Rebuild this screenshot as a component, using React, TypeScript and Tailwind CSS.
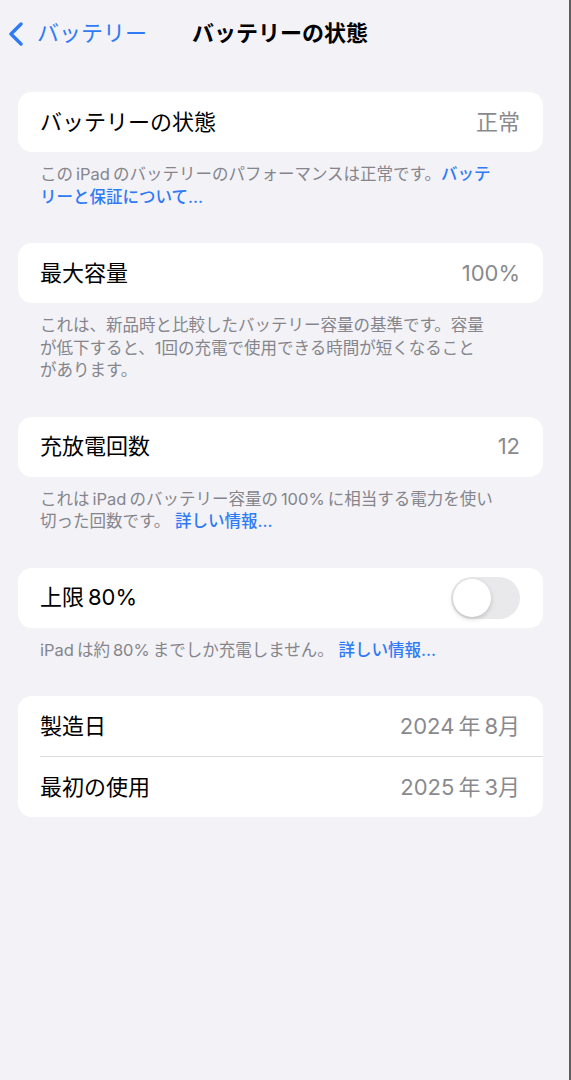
import type { ReactNode } from 'react';

const font = { fontFamily: '"Inter", "Noto Sans CJK JP", sans-serif' };

function Card({ children }: { children: ReactNode }) {
  return <div className="ml-[18px] w-[525px] rounded-[14px] bg-white">{children}</div>;
}

function Row({ label, value }: { label: string; value?: ReactNode }) {
  return (
    <div className="flex h-[60px] items-center justify-between pl-[22px] pr-[23px]">
      <span className="text-[22px] text-black">{label}</span>
      {value}
    </div>
  );
}

function Value({ children }: { children: ReactNode }) {
  return <span className="text-[22px] text-[#8a8a8e]">{children}</span>;
}

function Footer({ children }: { children: ReactNode }) {
  return (
    <p className="ml-[40px] mb-[35px] pt-[11px] text-[16.5px] leading-[22.5px] text-[#85858b]">
      {children}
    </p>
  );
}

function Link({ children }: { children: ReactNode }) {
  return <span className="font-medium text-[#2f7bf5]">{children}</span>;
}

function Toggle() {
  return (
    <div className="flex h-[42px] w-[69px] items-center rounded-full bg-[#e9e9eb] p-[2px]">
      <div className="h-[38px] w-[38px] rounded-full bg-white shadow-[0_2px_5px_rgba(0,0,0,0.18)]" />
    </div>
  );
}

export default function App() {
  return (
    <div className="flex min-h-[1080px] bg-[#f2f2f7]" style={font}>
      <div className="flex-1">
        {/* Navigation bar */}
        <div className="flex h-[66px] items-center pl-[9px]">
          <svg width="14" height="24" viewBox="0 0 14 24" fill="none" className="mt-[1px]">
            <path d="M12 2 L2 12 L12 22" stroke="#2f7bf5" strokeWidth="3.4" strokeLinecap="round" strokeLinejoin="round" />
          </svg>
          <span className="ml-[14px] text-[22px] text-[#2f7bf5]">バッテリー</span>
          <span className="ml-[45px] text-[22px] font-bold text-black">バッテリーの状態</span>
        </div>

        <div className="mt-[26px]">
          <Card>
            <Row label="バッテリーの状態" value={<Value>正常</Value>} />
          </Card>
          <Footer>
            この{'\u2009'}iPad{'\u2009'}のバッテリーのパフォーマンスは正常です。<Link>バッテ<br />リーと保証について…</Link>
          </Footer>

          <Card>
            <Row label="最大容量" value={<Value>100%</Value>} />
          </Card>
          <Footer>
            これは、新品時と比較したバッテリー容量の基準です。容量
            <br />
            が低下すると、1回の充電で使用できる時間が短くなること
            <br />
            があります。
          </Footer>

          <Card>
            <Row label="充放電回数" value={<Value>12</Value>} />
          </Card>
          <Footer>
            これは{'\u2009'}iPad{'\u2009'}のバッテリー容量の{'\u2009'}100%{'\u2009'}に相当する電力を使い
            <br />
            切った回数です。 <Link>詳しい情報…</Link>
          </Footer>

          <Card>
            <Row label={'上限\u200980%'} value={<Toggle />} />
          </Card>
          <Footer>
            iPad{'\u2009'}は約{'\u2009'}80%{'\u2009'}までしか充電しません。 <Link>詳しい情報…</Link>
          </Footer>

          <Card>
            <Row label="製造日" value={<Value>{'2024\u2009年\u20098月'}</Value>} />
            <div className="ml-[22px] h-px bg-[#dcdce0]" />
            <Row label="最初の使用" value={<Value>{'2025\u2009年\u20093月'}</Value>} />
          </Card>
        </div>
      </div>
      <div className="w-[2px] bg-[#5e5e60]" />
    </div>
  );
}
